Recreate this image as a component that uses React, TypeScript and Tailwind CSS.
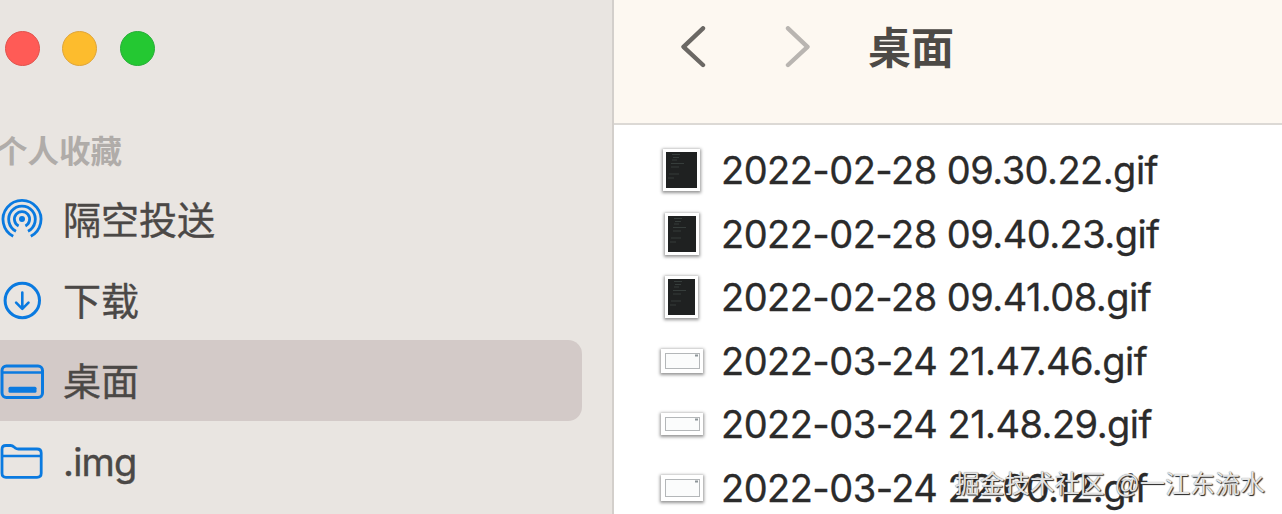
import type { ReactNode } from 'react'
import { clsx } from 'clsx'

interface SidebarItem {
  label: string
  icon: ReactNode
  active?: boolean
}

interface FileEntry {
  name: string
  kind: 'code' | 'window'
  width: number
  height: number
}

const files: FileEntry[] = [
  { name: '2022-02-28 09.30.22.gif', kind: 'code', width: 37, height: 42 },
  { name: '2022-02-28 09.40.23.gif', kind: 'code', width: 34, height: 42 },
  { name: '2022-02-28 09.41.08.gif', kind: 'code', width: 33, height: 42 },
  { name: '2022-03-24 21.47.46.gif', kind: 'window', width: 42, height: 24 },
  { name: '2022-03-24 21.48.29.gif', kind: 'window', width: 42, height: 22 },
  { name: '2022-03-24 22.00.12.gif', kind: 'window', width: 42, height: 26 },
]

function AirDropIcon() {
  return (
    <svg width="44" height="44" viewBox="0 0 44 44" fill="none" stroke="#0a7ae0" strokeWidth="2.8">
      <circle cx="22" cy="22" r="3" fill="#0a7ae0" stroke="none" />
      <path d="M18.6 29A7.6 7.6 0 1 1 25.4 29" />
      <path d="M16 34.2A13.3 13.3 0 1 1 28 34.2" />
      <path d="M13.2 39.2A19 19 0 1 1 30.8 39.2" />
    </svg>
  )
}

function DownloadIcon() {
  return (
    <svg width="44" height="44" viewBox="0 0 44 44" fill="none" stroke="#0a7ae0" strokeWidth="3" strokeLinecap="round" strokeLinejoin="round">
      <circle cx="22.3" cy="22.5" r="17.2" />
      <path d="M22.3 14.5v16M16.1 24.7 22.3 30.9l6.2-6.2" strokeWidth="2.6" />
    </svg>
  )
}

function DesktopIcon() {
  return (
    <svg width="44" height="44" viewBox="0 0 44 44" fill="none" stroke="#0a7ae0" strokeWidth="3">
      <rect x="2" y="8" width="40.5" height="31.5" rx="4.5" />
      <path d="M2 14.5h40.5" strokeWidth="2.6" />
      <rect x="8.5" y="28.7" width="28" height="6" rx="1.5" fill="#0a7ae0" stroke="none" />
    </svg>
  )
}

function FolderIcon() {
  return (
    <svg width="44" height="44" viewBox="0 0 44 44" fill="none" stroke="#0a7ae0" strokeWidth="2.8" strokeLinejoin="round">
      <path d="M2 34.3V10.5Q2 6.5 6 6.5H10.5Q12.5 6.5 14 8L15.5 9.2Q16.6 10 18.5 10H37Q41.2 10 41.2 14V34.3Q41.2 38.3 37 38.3H6Q2 38.3 2 34.3Z" />
      <path d="M2 17h39.2" strokeWidth="2.6" />
    </svg>
  )
}

const sidebarItems: SidebarItem[] = [
  { label: '隔空投送', icon: <AirDropIcon /> },
  { label: '下载', icon: <DownloadIcon /> },
  { label: '桌面', icon: <DesktopIcon />, active: true },
  { label: '.img', icon: <FolderIcon /> },
]

function Chevron({ direction }: { direction: 'left' | 'right' }) {
  return (
    <svg
      width="26"
      height="42"
      viewBox="0 0 26 42"
      fill="none"
      stroke={direction === 'left' ? '#6b6864' : '#b9b5b1'}
      strokeWidth="4.4"
      strokeLinecap="round"
      strokeLinejoin="round"
    >
      <path d={direction === 'left' ? 'M23 2.3 3.5 20.8 23 39' : 'M3 2.3 22.5 20.8 3 39'} />
    </svg>
  )
}

function Thumbnail({ kind, width, height }: Omit<FileEntry, 'name'>) {
  return (
    <span className="flex w-[43px] shrink-0 justify-center">
      <svg
        className="bg-white shadow-[0_1px_3px_1px_rgba(0,0,0,0.42)]"
        width={width}
        height={height}
        viewBox={`0 0 ${width} ${height}`}
        fill="none"
      >
        {kind === 'code' ? (
          <>
            <rect x="3" y="3" width={width - 6} height={height - 6} fill="#1f2121" />
            <path d="M9 5.5h8M10 8.5h6M9 11h5M8 14.5h13M8 18h8M6 25h10M5 29h6" stroke="#363d3b" strokeWidth="1" />
          </>
        ) : (
          <>
            <rect x="4.5" y="4.5" width={width - 8} height={height - 9} fill="#fbfcfc" stroke="#b4b7b9" />
            <path d={`M${width - 8} 6.5h3`} stroke="#8d9598" strokeWidth="2" />
          </>
        )}
      </svg>
    </span>
  )
}

function Sidebar() {
  return (
    <aside className="flex w-[614px] shrink-0 flex-col border-r-2 border-[#d3cfcb] bg-[#e9e5e1]">
      <div className="flex gap-[22.5px] pt-[30.5px] pl-[4.5px]">
        <span className="size-[35px] rounded-full border border-[#e0534d] bg-[#ff5b56]" />
        <span className="size-[35px] rounded-full border border-[#dfa53a] bg-[#fdbc2d]" />
        <span className="size-[35px] rounded-full border border-[#27ae38] bg-[#24c832]" />
      </div>
      <h2 className="mt-[61.5px] -ml-[4px] h-[52px] text-[31.5px] leading-[50px] font-bold text-[#b0aca9]">个人收藏</h2>
      <nav className="flex flex-col">
        {sidebarItems.map((item) => (
          <a
            key={item.label}
            className={clsx(
              'mr-[30px] flex h-[80.6px] items-center gap-[19px] rounded-r-[14px] text-[38px] leading-none text-[#4b4846] [-webkit-text-stroke:0.4px_#4b4846]',
              item.active && 'bg-[#d3cac8]',
            )}
          >
            {item.icon}
            <span className={clsx('pt-[2px]', item.label === '.img' && 'tracking-[-0.8px]')}>{item.label}</span>
          </a>
        ))}
      </nav>
    </aside>
  )
}

export default function App() {
  return (
    <div className="relative flex h-[514px] w-[1282px] overflow-hidden bg-white font-['Inter','Noto_Sans_CJK_SC',sans-serif]">
      <Sidebar />
      <main className="flex min-w-0 flex-1 flex-col">
        <header className="flex h-[125px] shrink-0 items-start border-b-2 border-[#dcd9d5] bg-[#fdf8f1] pt-[26px] pl-[66px]">
          <Chevron direction="left" />
          <span className="ml-[79px]">
            <Chevron direction="right" />
          </span>
          <h1 className="ml-[57px] text-[43px] leading-[44px] font-bold text-[#4d4a46]">桌面</h1>
        </header>
        <ul className="flex flex-col pt-[13.7px] pl-[46px]">
          {files.map((file) => (
            <li key={file.name} className="flex h-[63.5px] items-center gap-[18px]">
              <Thumbnail kind={file.kind} width={file.width} height={file.height} />
              <span className="text-[38px] leading-none tracking-[-0.54px] whitespace-nowrap text-[#2b2b2b] [-webkit-text-stroke:0.3px_#2b2b2b]">
                {file.name}
              </span>
            </li>
          ))}
        </ul>
      </main>
      <p className="absolute right-[17px] bottom-[12px] font-['Liberation_Sans','Noto_Sans_CJK_SC',sans-serif] text-[25px] leading-[36px] [word-spacing:3px] whitespace-nowrap text-[#e4e4e4] [text-shadow:1px_1px_1px_#222,0_0_1px_#777]">
        掘金技术社区 @一江东流水
      </p>
    </div>
  )
}
